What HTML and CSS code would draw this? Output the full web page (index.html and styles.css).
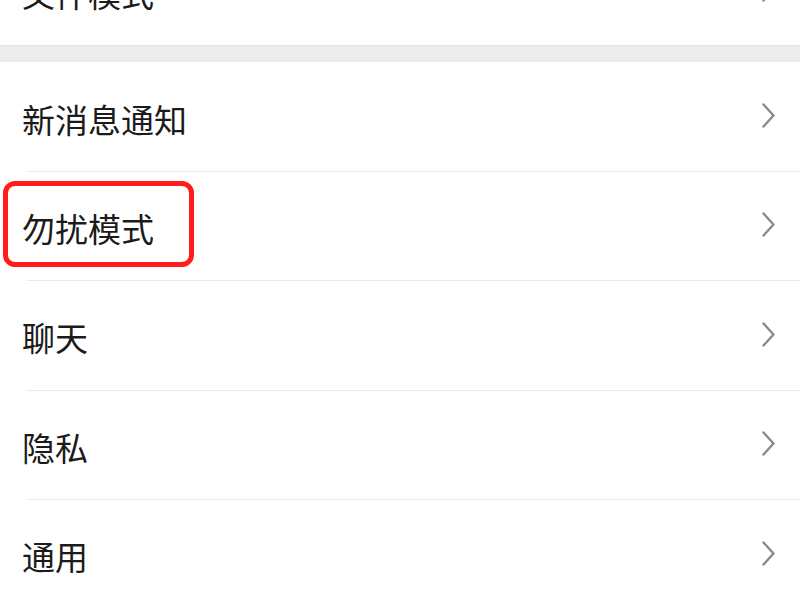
FILE: index.html
```html
<!DOCTYPE html>
<html lang="zh-CN">
<head>
<meta charset="utf-8">
<link rel="stylesheet" href="styles.css">
</head>
<body>
<div class="page">
  <ul class="group">
    <li class="row last"><span class="label">文件模式</span><svg class="chev" viewBox="0 0 13 25"><path d="M1.5 1.5 L11.5 12.5 L1.5 23.5"/></svg></li>
  </ul>
  <div class="gap"></div>
  <ul class="group">
    <li class="row"><span class="label">新消息通知</span><svg class="chev" viewBox="0 0 13 25"><path d="M1.5 1.5 L11.5 12.5 L1.5 23.5"/></svg></li>
    <li class="row marked"><span class="label">勿扰模式</span><svg class="chev" viewBox="0 0 13 25"><path d="M1.5 1.5 L11.5 12.5 L1.5 23.5"/></svg><span class="highlight"></span></li>
    <li class="row"><span class="label">聊天</span><svg class="chev" viewBox="0 0 13 25"><path d="M1.5 1.5 L11.5 12.5 L1.5 23.5"/></svg></li>
    <li class="row"><span class="label">隐私</span><svg class="chev" viewBox="0 0 13 25"><path d="M1.5 1.5 L11.5 12.5 L1.5 23.5"/></svg></li>
    <li class="row"><span class="label">通用</span><svg class="chev" viewBox="0 0 13 25"><path d="M1.5 1.5 L11.5 12.5 L1.5 23.5"/></svg></li>
  </ul>
</div>
</body>
</html>
```
FILE: styles.css
```css
html, body {
  margin: 0;
  padding: 0;
  background: #ffffff;
  overflow: hidden;
}
body {
  font-family: "Noto Sans CJK SC", "Noto Sans", sans-serif;
  color: #1b1b1b;
}
.page {
  margin-top: -64px;
}
.group {
  list-style: none;
  margin: 0;
  padding: 0;
  background: #ffffff;
}
.gap {
  height: 17px;
  background: #ececec;
  border-top: 1px solid #e4e4e4;
  box-sizing: border-box;
}
.row {
  position: relative;
  display: flex;
  align-items: center;
  justify-content: space-between;
  height: 109.4px;
  box-sizing: border-box;
  margin-left: 27px;
  padding-right: 25px;
  padding-top: 4px;
  border-bottom: 1px solid #e8e8e8;
}
.row.last {
  border-bottom: none;
}
.label {
  margin-left: -5px;
  font-size: 33px;
  line-height: 40px;
  letter-spacing: 0;
}
.chev {
  width: 13px;
  height: 25px;
  margin-top: -6px;
  fill: none;
  stroke: #8a8a8a;
  stroke-width: 2.4;
  stroke-linecap: round;
  stroke-linejoin: round;
}
.highlight {
  position: absolute;
  left: -24px;
  top: 9px;
  width: 191px;
  height: 86px;
  box-sizing: border-box;
  border: 5px solid #ff1c1c;
  border-radius: 12px;
}
```
